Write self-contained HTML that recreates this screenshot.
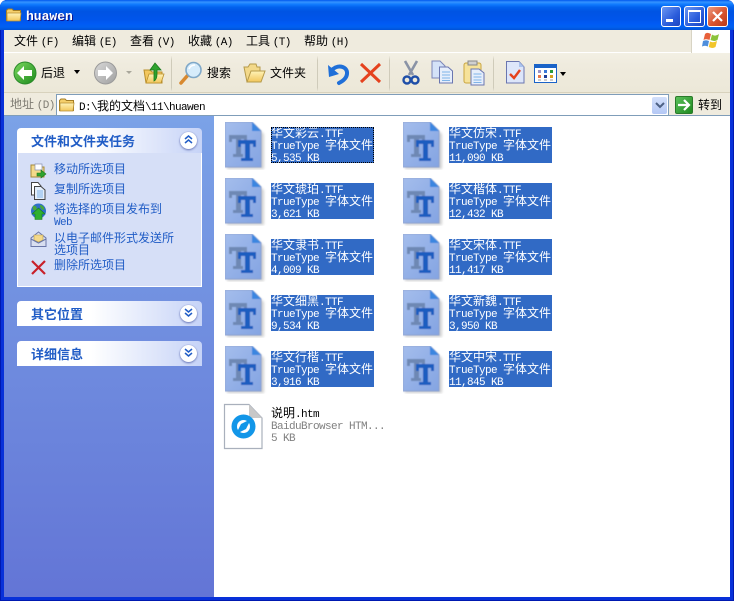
<!DOCTYPE html>
<html><head><meta charset="utf-8"><style>
html,body{margin:0;padding:0;width:734px;height:601px;overflow:hidden;background:#fff}
*{box-sizing:border-box}
div,span.t{position:absolute}
body{font:12px/12px "WenQuanYi Zen Hei","Noto Sans CJK SC",sans-serif;color:#000}
i{font:normal 11px/12px "Liberation Mono",monospace;letter-spacing:-.6px}
p{margin:0;height:12px;line-height:12px;white-space:pre;overflow:visible}
.x{white-space:nowrap}
svg{position:absolute;overflow:visible}
.sel{background:#316AC5;color:#fff;width:103px;height:36px}
.sep{width:1px;background:linear-gradient(#EFEBDE,#CFCBBA 12%,#CFCBBA 88%,#EFEBDE);top:56px;height:36px}
.lnk{color:#215DC6;left:54px;width:128px}
.hd{left:17px;width:185px;height:25px;border-radius:4px 4px 0 0;background:linear-gradient(90deg,#fff 0,#fff 40%,#C6D3F7 100%)}
.hdt{left:31px;font-weight:bold;font-size:13px;color:#215DC6;line-height:13px;white-space:nowrap}
.cir{left:180px;width:17px;height:17px;border-radius:50%;background:#fff;box-shadow:0 1px 2px #6a78b8,0 0 1px #8090c8}
</style></head><body>
<svg width="0" height="0" style="position:absolute"><defs>
<filter id="b" x="-10%" y="-10%" width="120%" height="120%"><feGaussianBlur stdDeviation=".45"/></filter>
<filter id="b2" x="-20%" y="-20%" width="140%" height="140%"><feGaussianBlur stdDeviation="1.2"/></filter>
<linearGradient id="pg" x1="0" y1="0" x2="1" y2="1"><stop offset="0" stop-color="#A4BDEC"/><stop offset="1" stop-color="#84A4E2"/></linearGradient>
<linearGradient id="fd" x1="0" y1="0" x2="0" y2="1"><stop offset="0" stop-color="#FFF3B8"/><stop offset="1" stop-color="#F2C65A"/></linearGradient>
<linearGradient id="gr" x1="0" y1="0" x2="1" y2="1"><stop offset="0" stop-color="#7BD85F"/><stop offset="1" stop-color="#1C8A1C"/></linearGradient>
<linearGradient id="gy" x1="0" y1="0" x2="1" y2="1"><stop offset="0" stop-color="#D8D8D8"/><stop offset="1" stop-color="#A0A0A0"/></linearGradient>
<symbol id="tt" viewBox="0 0 42 48" width="42" height="48">
<path d="M2 3H29L39 12V47H2Z" fill="#9A9A9A" opacity=".45" filter="url(#b2)"/>
<g filter="url(#b)">
<path d="M0 0H27L36 9V45H0Z" fill="url(#pg)" stroke="#8AA0D0" stroke-width="1"/>
<path d="M27 0L36 9H27Z" fill="#3A86E0"/>
<path d="M4 13H22V20H19V17H16V32H18V35H8V32H11V17H7V20H4Z" fill="#6E88B4"/>
<path d="M13 18H31V25H28V22H25V36H28V39H16V36H20V22H16V25H13Z" fill="#1C5DC0"/>
</g>
</symbol>
<symbol id="fold" viewBox="0 0 16 14" width="16" height="14">
<path d="M.5 2.500L2 1H6L7.500 2.500H14.500V12.500H.5Z" fill="#F5CF6B" stroke="#A57E25"/>
<path d="M1 5H15L14 13H1Z" fill="url(#fd)" stroke="#B68F33" stroke-width=".8"/>
</symbol>
</defs></svg>

<!-- frame -->
<div style="left:0;top:0;width:734px;height:601px;background:#0831D9;border-radius:7px 7px 0 0;box-shadow:inset 0 0 0 1px #0019B0"></div>
<div style="left:0;top:0;width:734px;height:30px;border-radius:7px 7px 0 0;background:linear-gradient(#0058EE 0,#3593FF 7%,#127DFF 14%,#0262EE 24%,#0054E3 38%,#0055EB 65%,#005BF5 80%,#0060F0 90%,#0052D6 100%)"></div>
<svg style="left:6px;top:8px" width="16" height="14"><use href="#fold"/></svg>
<div class="x" style="left:26px;top:10px;color:#fff;font:bold 13px/13px 'Liberation Mono',monospace;text-shadow:1px 1px 0 #0F1089">huawen</div>
<!-- window buttons -->
<div style="left:661px;top:6px;width:20px;height:21px;border:1px solid #fff;border-radius:3px;background:linear-gradient(135deg,#6C97F2,#2A5CDB 60%,#1C45C0)"></div>
<div style="left:666px;top:19px;width:7px;height:3px;background:#fff"></div>
<div style="left:684px;top:6px;width:21px;height:21px;border:1px solid #fff;border-radius:3px;background:linear-gradient(135deg,#6C97F2,#2A5CDB 60%,#1C45C0)"></div>
<div style="left:688px;top:10px;width:13px;height:13px;border:1px solid #fff;border-top-width:2px"></div>
<div style="left:707px;top:6px;width:21px;height:21px;border:1px solid #fff;border-radius:3px;background:linear-gradient(135deg,#EC9A80,#D8532F 55%,#B93A18)"></div>
<svg style="left:707px;top:6px" width="21" height="21"><path d="M6 6L15 15M15 6L6 15" stroke="#fff" stroke-width="2.200"/></svg>

<!-- menu -->
<div style="left:4px;top:30px;width:726px;height:23px;background:#EFEBDE;border-bottom:1px solid #fff"></div>
<div class="x" style="left:14px;top:35px">文件 <i>(F)</i></div>
<div class="x" style="left:72px;top:35px">编辑 <i>(E)</i></div>
<div class="x" style="left:130px;top:35px">查看 <i>(V)</i></div>
<div class="x" style="left:188px;top:35px">收藏 <i>(A)</i></div>
<div class="x" style="left:246px;top:35px">工具 <i>(T)</i></div>
<div class="x" style="left:304px;top:35px">帮助 <i>(H)</i></div>
<div style="left:691px;top:30px;width:39px;height:23px;background:#fff;border-left:1px solid #D8D4C4"></div>
<svg style="left:701px;top:31px" width="20" height="19"><path d="M4 3C6 1 8 2 10 3L8.500 9C6 8 4 8 2.500 9Z" fill="#E8603A"/><path d="M11 3.500C13 5 15 5 18 3L16.500 9C14 10.500 12 10 9.500 9Z" fill="#8CC33A"/><path d="M2 10C4 9 6 9 8 10L6.800 15.500C5 14.500 3 14.500 1 15.500Z" fill="#4E8EDC"/><path d="M9 10.500C11 11.500 13 11.500 16 10L14.500 16C12 17.500 10 17 7.800 16Z" fill="#F2C52A"/></svg>

<!-- toolbar -->
<div style="left:4px;top:53px;width:726px;height:40px;background:linear-gradient(#F3F0E4,#EFEBDE 30%,#ECE8D8);border-bottom:1px solid #D8D2BD"></div>
<svg style="left:13px;top:61px" width="24" height="24"><circle cx="12" cy="12" r="11" fill="url(#gr)" stroke="#2A8A2A"/><path d="M4 12L11 5V9H19V15H11V19Z" fill="#fff"/></svg>
<div class="x" style="left:41px;top:67px">后退</div>
<svg style="left:74px;top:70px" width="7" height="4"><path d="M0 0H6L3 4Z" fill="#000"/></svg>
<svg style="left:94px;top:61px" width="24" height="24"><circle cx="11.500" cy="12" r="11" fill="url(#gy)" stroke="#9A9A9A"/><path d="M19 12L12 5V9H4V15H12V19Z" fill="#fff"/></svg>
<svg style="left:126px;top:71px" width="6" height="3"><path d="M0 0H6L3 3Z" fill="#A9A79B"/></svg>
<svg style="left:143px;top:61px" width="22" height="24"><path d="M1 9H7L9 11H19V22H3Z" fill="#F3C75E" stroke="#B98F2C"/><path d="M3 22L6 13H21L18 22Z" fill="url(#fd)" stroke="#B98F2C" stroke-width=".8"/><path d="M11 20V9H7L12 2L18 9H14V13C14 17 13 19 11 20Z" fill="#2FA22F" stroke="#1B7A1B" stroke-width=".8"/></svg>
<div class="sep" style="left:171px"></div>
<svg style="left:179px;top:61px" width="24" height="24"><path d="M2 22L9 14" stroke="#D8892F" stroke-width="3.500" stroke-linecap="round"/><circle cx="14.500" cy="9" r="7.500" fill="#D6ECFB" stroke="#7FA8C8" stroke-width="1.600"/><path d="M10 8C11 5 14 4 16 4" stroke="#fff" stroke-width="1.500" fill="none"/></svg>
<div class="x" style="left:207px;top:67px">搜索</div>
<svg style="left:243px;top:62px" width="23" height="22"><path d="M1 5H5L7 2H13L14 5H17V20H4Z" fill="#F3D98A" stroke="#B59A4A"/><path d="M4 20L8 9H22L18 20Z" fill="url(#fd)" stroke="#B59A4A"/></svg>
<div class="x" style="left:270px;top:67px">文件夹</div>
<div class="sep" style="left:317px"></div>
<svg style="left:326px;top:61px" width="24" height="24"><path d="M7 8C13 3 22 6 21 13C20.500 17 17 20 13 22" fill="none" stroke="#1F6FD8" stroke-width="4" stroke-linecap="round"/><path d="M2 4L3 16L13 13Z" fill="#1F6FD8"/></svg>
<svg style="left:359px;top:62px" width="23" height="22"><path d="M2 2L21 20M21 2L2 20" stroke="#E5421E" stroke-width="3"/></svg>
<div class="sep" style="left:389px"></div>
<svg style="left:402px;top:60px" width="18" height="25"><path d="M3 1L11 15M15 1L7 15" stroke="#8A93A6" stroke-width="2.600"/><circle cx="5" cy="20" r="3.500" fill="none" stroke="#1F4FA8" stroke-width="2.400"/><circle cx="13" cy="20" r="3.500" fill="none" stroke="#1F4FA8" stroke-width="2.400"/></svg>
<svg style="left:431px;top:60px" width="24" height="25"><path d="M1 1H9L14 6V18H1Z" fill="#D4E2F8" stroke="#7C86B8"/><path d="M8.500 7H17L21.500 11V23H8.500Z" fill="#E6EEFB" stroke="#6A76B0"/><path d="M11 12H19M11 15H19M11 18H19M11 20.500H19" stroke="#7FB4E8"/></svg>
<svg style="left:463px;top:60px" width="23" height="26"><rect x="1" y="3" width="17" height="20" rx="2" fill="#F6E29A" stroke="#C9A540"/><rect x="5" y="1" width="9" height="4" fill="#D0D0D0" stroke="#888"/><path d="M8 9H16L21 13V25H8Z" fill="#E6EEFB" stroke="#6A76B0"/><path d="M10.500 14H18.500M10.500 17H18.500M10.500 20H18.500M10.500 22.500H18.500" stroke="#7FB4E8"/></svg>
<div class="sep" style="left:493px"></div>
<svg style="left:506px;top:61px" width="19" height="23"><path d="M.5 .5H13L18 6V22H.5Z" fill="#DDE6FA" stroke="#6A76B0"/><path d="M13 .5L18 6H13Z" fill="#A9C2EE"/><path d="M4 13L8 17L14 9" fill="none" stroke="#E5421E" stroke-width="2.400"/></svg>
<svg style="left:534px;top:64px" width="24" height="19"><rect x=".5" y=".5" width="22" height="18" fill="#fff" stroke="#1A63C8"/><rect x="1" y="1" width="22" height="3" fill="#1A63C8"/><rect x="4" y="6" width="3" height="3" fill="#9A94C8"/><rect x="10" y="6" width="3" height="3" fill="#3A78D8"/><rect x="16" y="6" width="3" height="3" fill="#2A9A3A"/><rect x="4" y="11" width="3" height="3" fill="#E8784A"/><rect x="10" y="11" width="3" height="3" fill="#1F3F98"/><rect x="16" y="11" width="3" height="3" fill="#D8A020"/><path d="M4 16H7M10 16H13M16 16H19" stroke="#999"/></svg>
<svg style="left:560px;top:72px" width="6" height="4"><path d="M0 0H6L3 4Z" fill="#000"/></svg>

<!-- address -->
<div style="left:4px;top:93px;width:726px;height:23px;background:#EFEBDE"></div>
<div class="x" style="left:10px;top:98px;color:#7F7C73">地址 <i>(D)</i></div>
<div style="left:56px;top:94px;width:613px;height:22px;background:#fff;border:1px solid #7F9DB9"></div>
<svg style="left:59px;top:98px" width="16" height="14"><use href="#fold"/></svg>
<div class="x" style="left:79px;top:100px"><i>D:\</i>我的文档<i>\11\huawen</i></div>
<div style="left:652px;top:97px;width:15px;height:17px;background:linear-gradient(#D3E0FB,#B4C8F5);border-radius:2px"></div>
<svg style="left:655px;top:102px" width="10" height="7"><path d="M1 1L5 5L9 1" fill="none" stroke="#4D6185" stroke-width="2"/></svg>
<div style="left:675px;top:96px;width:18px;height:18px;background:linear-gradient(135deg,#5CC05C,#1E8A1E);border-radius:2px;border:1px solid #2A7A2A"></div>
<svg style="left:675px;top:96px" width="18" height="18"><path d="M3 9H13M9 4L14 9L9 14" fill="none" stroke="#fff" stroke-width="2.200"/></svg>
<div class="x" style="left:698px;top:99px">转到</div>

<!-- content -->
<div style="left:4px;top:115px;width:726px;height:1px;background:#7F9DB9"></div>
<div style="left:4px;top:116px;width:726px;height:481px;background:#fff"></div>
<div style="left:4px;top:116px;width:210px;height:481px;background:linear-gradient(#7BA2E7,#6375D6)"></div>

<!-- panel 1 -->
<div class="hd" style="top:128px"></div>
<div style="left:17px;top:153px;width:185px;height:134px;background:#D6DFF7;border:1px solid #fff;border-top:0"></div>
<div class="hdt" style="top:134px">文件和文件夹任务</div>
<div class="cir" style="top:132px"></div>
<svg style="left:184px;top:135px" width="9" height="10"><path d="M1 4L4.500 1L8 4M1 8L4.500 5L8 8" fill="none" stroke="#215DC6" stroke-width="1.500"/></svg>
<svg style="left:30px;top:162px" width="17" height="17"><path d="M1 3H6L8 5H14V15H1Z" fill="#F3D98A" stroke="#A58A3A"/><path d="M5 2H12V8H5Z" fill="#fff" stroke="#8890B0" stroke-width=".7"/><path d="M7 14V11H11V8L16 12L11 16V14Z" fill="#2FA22F" stroke="#1B7A1B" stroke-width=".6"/></svg>
<div class="lnk" style="top:163px"><p>移动所选项目</p></div>
<svg style="left:31px;top:182px" width="15" height="18"><path d="M.5 .5H7L10 4V13H.5Z" fill="#fff" stroke="#444"/><path d="M3.500 4.500H10L14 8V17.500H3.500Z" fill="#E4EEFB" stroke="#444"/><path d="M6 9H12M6 11H12M6 13H12M6 15H12" stroke="#7FB4E8"/></svg>
<div class="lnk" style="top:183px"><p>复制所选项目</p></div>
<svg style="left:30px;top:203px" width="17" height="17"><circle cx="8.500" cy="8" r="7.500" fill="#2E6FC8"/><path d="M3 3C6 2 8 5 6 7C4 8 2 7 3 3ZM10 2C13 2 15 5 14 7C12 7 10 5 10 2Z" fill="#4AA83A"/><path d="M8.500 5L15 11H12V16.500H5V11H2Z" fill="#2FB02F" stroke="#1B7A1B" stroke-width=".6"/></svg>
<div class="lnk" style="top:203px"><p>将选择的项目发布到</p><p><i>Web</i></p></div>
<svg style="left:30px;top:231px" width="17" height="17"><path d="M1 7L8.500 1L16 7V15.500H1Z" fill="#D8DEF0" stroke="#6A76A8"/><path d="M4 4H13V9L8.500 11L4 9Z" fill="#F4D98A" stroke="#B59A4A" stroke-width=".6"/><path d="M1 8L8.500 12L16 8" fill="none" stroke="#6A76A8"/></svg>
<div class="lnk" style="top:232px"><p>以电子邮件形式发送所</p><p>选项目</p></div>
<svg style="left:31px;top:260px" width="15" height="15"><path d="M1 1L14 14M14 1L1 14" stroke="#C8202A" stroke-width="2.200"/></svg>
<div class="lnk" style="top:259px"><p>删除所选项目</p></div>

<!-- panel 2 -->
<div class="hd" style="top:301px"></div>
<div class="hdt" style="top:307px">其它位置</div>
<div class="cir" style="top:305px"></div>
<svg style="left:184px;top:308px" width="9" height="10"><path d="M1 1L4.500 4L8 1M1 5L4.500 8L8 5" fill="none" stroke="#215DC6" stroke-width="1.500"/></svg>
<!-- panel 3 -->
<div class="hd" style="top:341px"></div>
<div class="hdt" style="top:347px">详细信息</div>
<div class="cir" style="top:345px"></div>
<svg style="left:184px;top:348px" width="9" height="10"><path d="M1 1L4.500 4L8 1M1 5L4.500 8L8 5" fill="none" stroke="#215DC6" stroke-width="1.500"/></svg>

<!-- files col 1 -->
<svg style="left:225px;top:122px" width="42" height="48"><use href="#tt"/></svg>
<div class="sel" style="left:271px;top:127px;outline:1px dotted #000;outline-offset:-1px"><p>华文彩云<i>.TTF</i></p><p><i>TrueType </i>字体文件</p><p><i>5,535 KB</i></p></div>
<svg style="left:225px;top:178px" width="42" height="48"><use href="#tt"/></svg>
<div class="sel" style="left:271px;top:183px"><p>华文琥珀<i>.TTF</i></p><p><i>TrueType </i>字体文件</p><p><i>3,621 KB</i></p></div>
<svg style="left:225px;top:234px" width="42" height="48"><use href="#tt"/></svg>
<div class="sel" style="left:271px;top:239px"><p>华文隶书<i>.TTF</i></p><p><i>TrueType </i>字体文件</p><p><i>4,009 KB</i></p></div>
<svg style="left:225px;top:290px" width="42" height="48"><use href="#tt"/></svg>
<div class="sel" style="left:271px;top:295px"><p>华文细黑<i>.TTF</i></p><p><i>TrueType </i>字体文件</p><p><i>9,534 KB</i></p></div>
<svg style="left:225px;top:346px" width="42" height="48"><use href="#tt"/></svg>
<div class="sel" style="left:271px;top:351px"><p>华文行楷<i>.TTF</i></p><p><i>TrueType </i>字体文件</p><p><i>3,916 KB</i></p></div>

<!-- files col 2 -->
<svg style="left:403px;top:122px" width="42" height="48"><use href="#tt"/></svg>
<div class="sel" style="left:449px;top:127px"><p>华文仿宋<i>.TTF</i></p><p><i>TrueType </i>字体文件</p><p><i>11,090 KB</i></p></div>
<svg style="left:403px;top:178px" width="42" height="48"><use href="#tt"/></svg>
<div class="sel" style="left:449px;top:183px"><p>华文楷体<i>.TTF</i></p><p><i>TrueType </i>字体文件</p><p><i>12,432 KB</i></p></div>
<svg style="left:403px;top:234px" width="42" height="48"><use href="#tt"/></svg>
<div class="sel" style="left:449px;top:239px"><p>华文宋体<i>.TTF</i></p><p><i>TrueType </i>字体文件</p><p><i>11,417 KB</i></p></div>
<svg style="left:403px;top:290px" width="42" height="48"><use href="#tt"/></svg>
<div class="sel" style="left:449px;top:295px"><p>华文新魏<i>.TTF</i></p><p><i>TrueType </i>字体文件</p><p><i>3,950 KB</i></p></div>
<svg style="left:403px;top:346px" width="42" height="48"><use href="#tt"/></svg>
<div class="sel" style="left:449px;top:351px"><p>华文中宋<i>.TTF</i></p><p><i>TrueType </i>字体文件</p><p><i>11,845 KB</i></p></div>

<!-- htm -->
<svg style="left:224px;top:404px" width="40" height="46"><path d="M.5 .5H25L38 14V44.500H.5Z" fill="#fff" stroke="#A9B0BC" stroke-width="1.200"/><path d="M25 .5L38 14H25Z" fill="#C8C8C8"/><circle cx="19.500" cy="22.500" r="12" fill="#1296E8"/><circle cx="19.500" cy="22.500" r="6.500" fill="#fff"/><path d="M12 30L17 20L27 15L22 25Z" fill="#1296E8"/></svg>
<div style="left:271px;top:407px"><p>说明<i>.htm</i></p><p style="color:#808080"><i>BaiduBrowser HTM...</i></p><p style="color:#808080"><i>5 KB</i></p></div>
</body></html>
